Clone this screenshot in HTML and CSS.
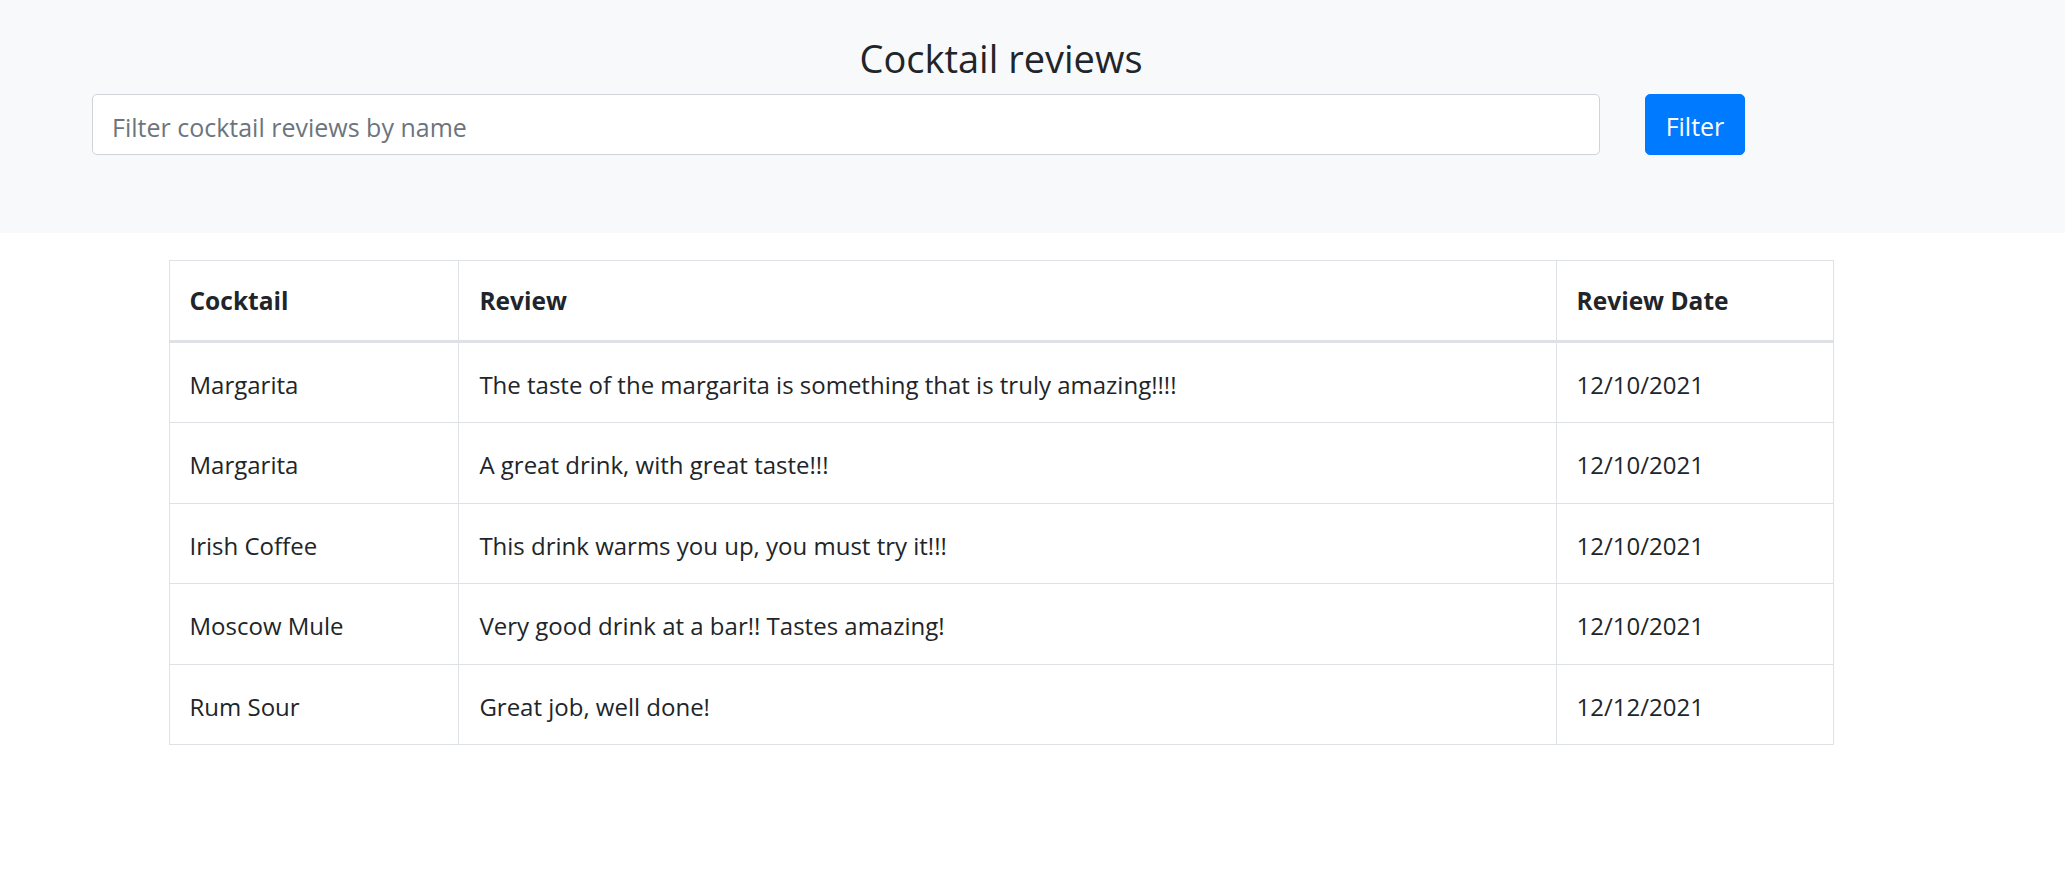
FILE: index.html
```html
<!DOCTYPE html>
<html lang="en">
<head>
<meta charset="utf-8">
<title>Cocktail reviews</title>
<link rel="stylesheet" href="styles.css">
</head>
<body>
<header class="hero">
  <div class="page">
    <h2 class="title">Cocktail reviews</h2>
    <form class="filter-row">
      <input class="filter-input" type="text" placeholder="Filter cocktail reviews by name">
      <button class="filter-btn" type="button">Filter</button>
    </form>
  </div>
</header>
<main class="page">
  <table class="reviews">
    <thead>
      <tr><th class="col-name">Cocktail</th><th class="col-review">Review</th><th class="col-date">Review Date</th></tr>
    </thead>
    <tbody>
      <tr><td>Margarita</td><td>The taste of the margarita is something that is truly amazing!!!!</td><td>12/10/2021</td></tr>
      <tr><td>Margarita</td><td>A great drink, with great taste!!!</td><td>12/10/2021</td></tr>
      <tr><td>Irish Coffee</td><td>This drink warms you up, you must try it!!!</td><td>12/10/2021</td></tr>
      <tr><td>Moscow Mule</td><td>Very good drink at a bar!! Tastes amazing!</td><td>12/10/2021</td></tr>
      <tr><td>Rum Sour</td><td>Great job, well done!</td><td>12/12/2021</td></tr>
    </tbody>
  </table>
</main>
</body>
</html>
```
FILE: styles.css
```css
* { box-sizing: border-box; }
html, body { margin: 0; padding: 0; }
body {
  font-family: "Open Sans", "Noto Sans", sans-serif;
  color: #212529;
  background: #fff;
}
.page {
  width: 2002px;
}
.hero {
  background: #f8f9fa;
  padding: 34px 0 78px;
}
.title {
  margin: 0;
  font-size: 38px;
  line-height: 48px;
  font-weight: 400;
  text-align: center;
}
.filter-row {
  margin: 12px 0 0;
  padding-left: 92px;
  display: flex;
  gap: 45px;
  align-items: center;
}
.filter-input {
  width: 1508px;
  height: 61px;
  padding: 4px 20px 0 19px;
  font-family: inherit;
  font-size: 25px;
  color: #495057;
  background: #fff;
  border: 1px solid #ced4da;
  border-radius: 5px;
  outline: none;
}
.filter-input::placeholder { color: #6c757d; }
.filter-btn {
  width: 100px;
  height: 61px;
  padding: 2px 0 0;
  font-family: inherit;
  font-size: 25px;
  color: #fff;
  background: #007bff;
  border: 1px solid #007bff;
  border-radius: 5px;
}
.reviews {
  margin: 27px auto 0;
  width: 1665px;
  border-collapse: collapse;
  font-size: 24px;
}
.reviews th, .reviews td {
  border: 1px solid #dee2e6;
  padding: 22px 20px 18px;
  text-align: left;
  vertical-align: middle;
  line-height: 39.4px;
}
.reviews th {
  font-weight: 700;
  font-size: 24.5px;
  line-height: 38px;
  padding: 21px 20px 20px;
  border-bottom: 3px solid #dee2e6;
}
.col-name { width: 290px; }
.col-review { width: 1098px; }
.col-date { width: 277px; }
```
